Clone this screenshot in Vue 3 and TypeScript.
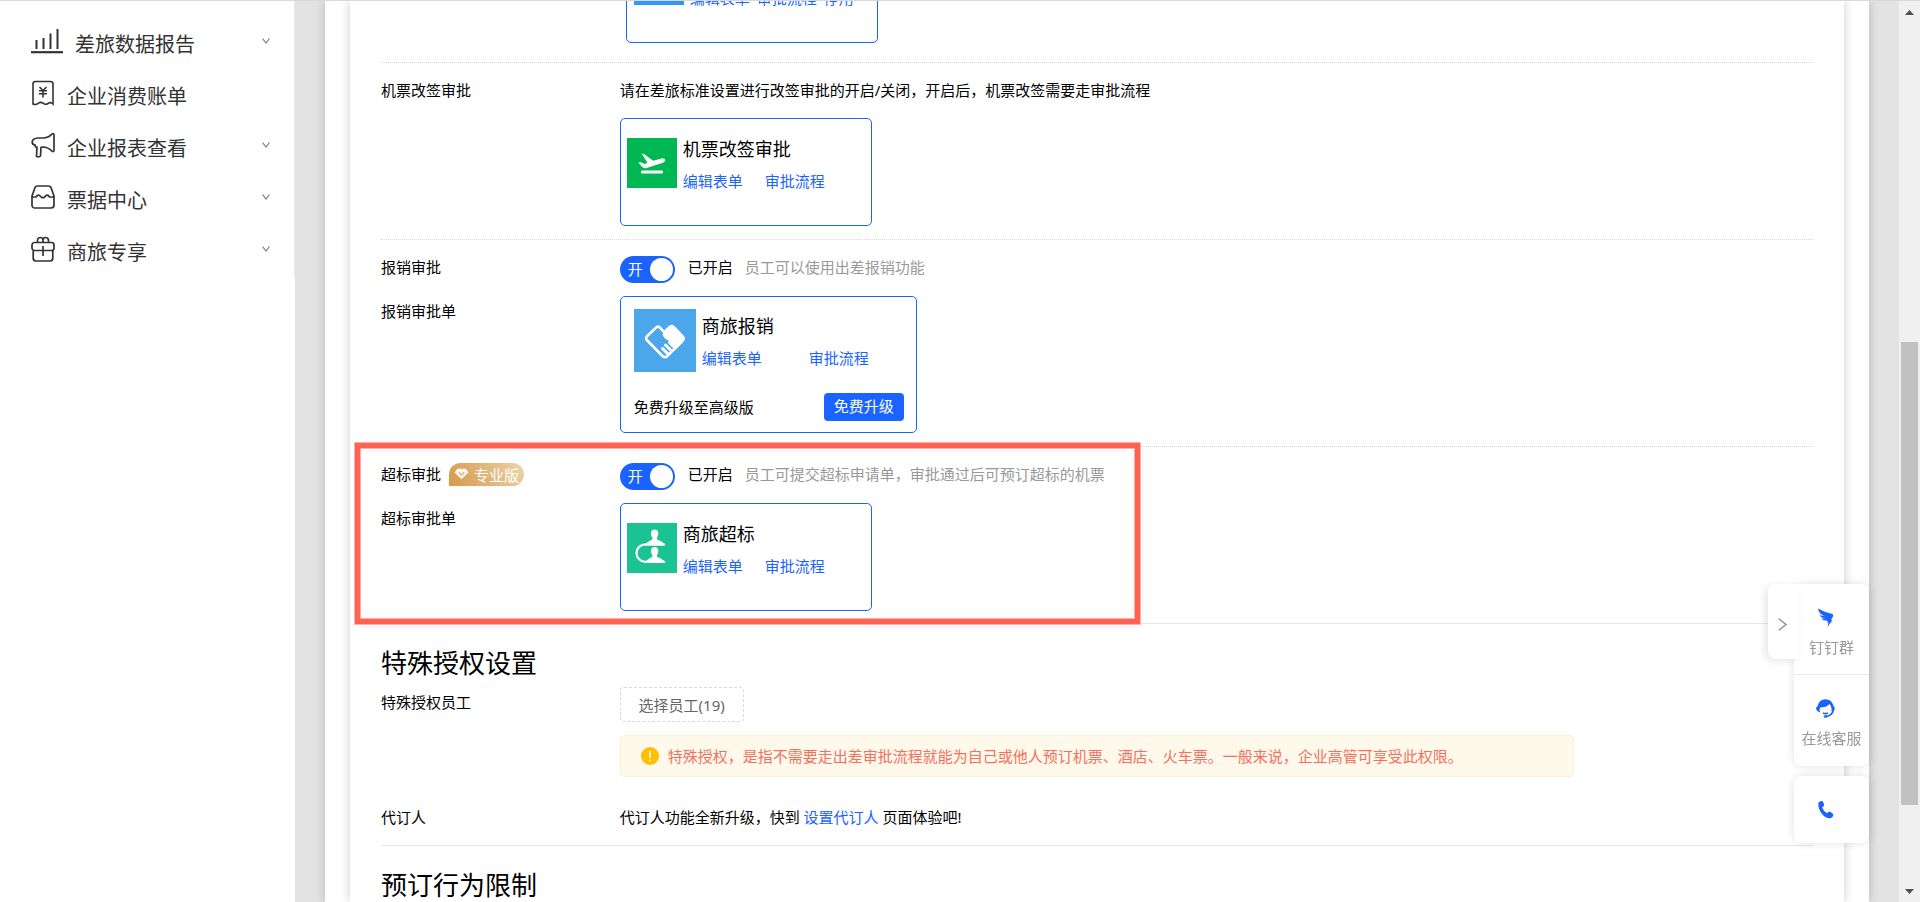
<script setup lang="ts">
import { ref } from 'vue'

interface MenuItem {
  icon: 'chart' | 'bill' | 'horn' | 'ticket' | 'gift'
  label: string
  expandable: boolean
}

const menu: MenuItem[] = [
  { icon: 'chart', label: '差旅数据报告', expandable: true },
  { icon: 'bill', label: '企业消费账单', expandable: false },
  { icon: 'horn', label: '企业报表查看', expandable: true },
  { icon: 'ticket', label: '票据中心', expandable: true },
  { icon: 'gift', label: '商旅专享', expandable: true },
]

const expenseOn = ref(true)
const overLimitOn = ref(true)
</script>

<template>
  <div class="page">
    <aside class="sidebar">
      <nav class="menu">
        <a v-for="item in menu" :key="item.label" href="#" class="menu-item">
          <svg v-if="item.icon === 'chart'" class="icon-wide" viewBox="0 0 32 26" fill="none" stroke="#333">
            <path d="M0 24.2h32" stroke-width="2.2" />
            <path d="M5.5 21V12M12.5 21V10M19.5 21V5.500M26.500 21V1" stroke-width="2" />
          </svg>
          <svg v-else-if="item.icon === 'bill'" class="icon" viewBox="0 0 24 26" fill="none" stroke="#333" stroke-width="1.6">
            <path d="M2 24V4Q2 1.500 4.500 1.500H19.500Q22 1.500 22 4V24Q19.500 21.500 17 23.500 14.500 25.200 12 23.200 9.500 21.500 7 23.500 4.500 25.200 2 24Z" />
            <path d="M8.500 7L12 10.500 15.500 7M8 10.700H16M8 13.700H16M12 10.500V17.500" />
          </svg>
          <svg v-else-if="item.icon === 'horn'" class="icon" viewBox="0 0 24 26" fill="none" stroke="#333" stroke-width="1.7" stroke-linejoin="round">
            <path d="M7 6H13Q18 5.500 21 2Q22.800 1 23 3V18.500Q22.800 20.200 21 19.200 17 15.200 12 15L10 15.300 9.500 24Q8 25.500 5.500 24.500L6 15.200 4.500 15 4.200 13.200Q1 12.500 1.200 9.500 2 6.500 7 6Z" />
          </svg>
          <svg v-else-if="item.icon === 'ticket'" class="icon" viewBox="0 0 24 26" fill="none" stroke="#333" stroke-width="1.7" stroke-linejoin="round">
            <path d="M1 12L4 3.500Q4.800 2 6.500 2H17.500Q19.200 2 20 3.500L23 12V21Q23 24 20 24H4Q1 24 1 21Z" />
            <path d="M1 13H5Q6.500 10.500 8 11.200L11 13.700H13L15.500 11.200Q17 10.500 18.500 13H23" />
          </svg>
          <svg v-else class="icon" viewBox="0 0 24 26" fill="none" stroke="#333" stroke-width="1.7">
            <rect x="1" y="6.500" width="22" height="8" rx="2.500" />
            <path d="M2.200 14.500V22Q2.200 25 5 25H19Q21.800 25 21.800 22V14.500M12 10V20M6.500 6.500V4.500Q6.500 1.500 9.500 1.500 12 1.500 12 4.500V6.500M12 4.500Q12 1.500 14.500 1.500 17.500 1.500 17.500 4.500V6.500" />
          </svg>
          <span>{{ item.label }}</span>
          <svg v-if="item.expandable" class="arrow" viewBox="0 0 8 6" fill="none" stroke="#777" stroke-width="1.100">
            <path d="M0.500 0.500L4 5 7.500 0.500" />
          </svg>
        </a>
      </nav>
    </aside>

    <div class="body">
      <div class="panel">
        <main class="sheet">
          <section class="group group-clipped">
            <div class="field">
              <div class="app-card app-card-inset">
                <span class="app-icon icon-sky"></span>
                <div class="app-info">
                  <h3>出差审批</h3>
                  <p class="links links-tight">
                    <a href="#">编辑表单</a>
                    <a href="#">审批流程</a>
                    <a href="#">停用</a>
                  </p>
                </div>
              </div>
            </div>
          </section>

          <section class="group">
            <div class="label">机票改签审批</div>
            <div class="field">
              <p class="text">请在差旅标准设置进行改签审批的开启/关闭，开启后，机票改签需要走审批流程</p>
              <div class="app-card app-card-after">
                <svg class="app-icon" viewBox="0 0 50 50">
                  <rect width="50" height="50" fill="#00b853" />
                  <path d="M14.500 15.200L17.800 16.500 26 22.800 35.500 20.200Q38 20 38.200 22.200 38 24 36 24.800L19 30.200Q16.500 30.600 15 28.800L11.500 24.800 13.500 24 17.500 26 20.500 24.800Z" fill="#fff" />
                  <rect x="14" y="32.500" width="22" height="3" rx="1" fill="#fff" />
                </svg>
                <div class="app-info">
                  <h3>机票改签审批</h3>
                  <p class="links"><a href="#">编辑表单</a><a href="#">审批流程</a></p>
                </div>
              </div>
            </div>
          </section>

          <section class="group">
            <div id="expense-label" class="label">报销审批</div>
            <div class="field switch-line">
              <button type="button" class="switch" :class="{ off: !expenseOn }" role="switch" :aria-checked="expenseOn" aria-labelledby="expense-label" @click="expenseOn = !expenseOn">
                <span>{{ expenseOn ? '开' : '关' }}</span><i></i>
              </button>
              <span class="state">已开启</span>
              <span class="hint">员工可以使用出差报销功能</span>
            </div>
            <div class="label label-form">报销审批单</div>
            <div class="field">
              <div class="upgrade-card">
                <div class="upgrade-top">
                  <svg class="app-icon-large" viewBox="0 0 62 63">
                    <rect width="62" height="63" fill="#4ca7ea" />
                    <path d="M38 18.500L31.500 24.500Q28 21 25.500 18.200 23.800 17 22 18.600L12.800 27.500Q11.500 29.200 12.800 31L28.500 47Q31 49.200 33.200 47.200L48.500 32" fill="none" stroke="#fff" stroke-width="2.600" stroke-linejoin="round" />
                    <path d="M31 20.500L35.500 16.500Q38 15 40.500 17L50 27Q52 29.500 50 32L42 39.500 34.500 31.500Q31 30.500 28.500 26Z" fill="#fff" />
                    <g stroke="#fff" stroke-width="3" stroke-linecap="round">
                      <path d="M35.500 33.500L41 39M31.500 36L37 41.500M28.500 39.500L34 45" />
                    </g>
                  </svg>
                  <div class="app-info">
                    <h3>商旅报销</h3>
                    <p class="links links-wide"><a href="#">编辑表单</a><a href="#">审批流程</a></p>
                  </div>
                </div>
                <div class="upgrade-bottom">
                  <span>免费升级至高级版</span>
                  <button type="button" class="primary">免费升级</button>
                </div>
              </div>
            </div>
          </section>

          <section class="group group-last">
            <div class="label label-badged">
              <span id="over-label">超标审批</span>
              <span class="badge">
                <svg viewBox="0 0 16 12">
                  <path d="M3.500 0.500H12.500L15.500 4.500 8 11.500 0.500 4.500Z" fill="#fff" opacity="0.900" />
                  <path d="M5 4.200L8 7 11 4.200" fill="none" stroke="#e0b070" stroke-width="1.300" />
                </svg>
                专业版
              </span>
            </div>
            <div class="field switch-line">
              <button type="button" class="switch" :class="{ off: !overLimitOn }" role="switch" :aria-checked="overLimitOn" aria-labelledby="over-label" @click="overLimitOn = !overLimitOn">
                <span>{{ overLimitOn ? '开' : '关' }}</span><i></i>
              </button>
              <span class="state">已开启</span>
              <span class="hint">员工可提交超标申请单，审批通过后可预订超标的机票</span>
            </div>
            <div class="label label-form">超标审批单</div>
            <div class="field">
              <div class="app-card">
                <svg class="app-icon" viewBox="0 0 50 50">
                  <rect width="50" height="50" fill="#1bc294" />
                  <g fill="#fff">
                    <path d="M27.500 6.500C31 6.500 31.800 9.500 31 12.500 30.500 14 29.800 14.500 29.800 16.200 33 18 36.500 18.500 38 22.500H18C20 18.500 23 18 25.500 16.200 25.500 14.500 24.500 14 24.200 12.500 23.500 9.500 24.500 6.500 27.500 6.500Z" />
                    <path d="M27.500 24C31 24 31.800 27 31 30 30.500 31.500 29.800 32 29.800 33.500 33 35.500 36.500 36 38 39.800H18C20 36 23 35.500 25.500 33.500 25.500 32 24.500 31.500 24.200 30 23.500 27 24.500 24 27.500 24Z" />
                  </g>
                  <path d="M37 21.300H18.500A9 8.700 0 0 0 18.500 38.800H37" fill="none" stroke="#fff" stroke-width="2.200" stroke-linecap="round" />
                </svg>
                <div class="app-info">
                  <h3>商旅超标</h3>
                  <p class="links"><a href="#">编辑表单</a><a href="#">审批流程</a></p>
                </div>
              </div>
            </div>
            <div class="highlight" aria-hidden="true"></div>
          </section>

          <section class="block">
            <h2>特殊授权设置</h2>
            <div class="group-row">
              <div class="label label-form">特殊授权员工</div>
              <div class="field">
                <button type="button" class="dashed">选择员工(19)</button>
                <div class="alert" role="note">
                  <svg viewBox="0 0 18 18">
                    <circle cx="9" cy="9" r="9" fill="#ffbf00" />
                    <path d="M9 3.500V11M9 12.800V14.500" stroke="#fff" stroke-width="1.500" />
                  </svg>
                  <span>特殊授权，是指不需要走出差审批流程就能为自己或他人预订机票、酒店、火车票。一般来说，企业高管可享受此权限。</span>
                </div>
              </div>
            </div>
            <div class="group-row booking">
              <div class="label">代订人</div>
              <div class="field">
                <p class="text">代订人功能全新升级，快到 <a href="#">设置代订人</a> 页面体验吧!</p>
              </div>
            </div>
          </section>

          <section class="block">
            <h2>预订行为限制</h2>
          </section>
        </main>
      </div>
    </div>

    <div class="scrollbar" aria-hidden="true">
      <svg viewBox="0 0 9 5"><path d="M0 5L4.500 0 9 5Z" fill="#505050" /></svg>
      <div class="track"><div class="thumb"></div></div>
      <svg viewBox="0 0 9 5"><path d="M0 0L4.500 5 9 0Z" fill="#505050" /></svg>
    </div>

    <div class="floater">
      <button type="button" class="collapse" aria-label="收起">
        <svg viewBox="0 0 9 13" fill="none" stroke="#888" stroke-width="1.300"><path d="M0.800 0.800L8 6.500 0.800 12.200" /></svg>
      </button>
      <div class="float-card">
        <a href="#" class="float-item">
          <svg viewBox="0 0 19 19"><path d="M2 0.500Q8 4 16.500 6 17.500 7 17 8.500L15 12H16.500L11.500 19 12.500 14.500H11L11.800 12.800Q7 13 5.200 10.500L10 10.800Q5 10 3.500 7.200L9 8.200Q2.500 6 2 0.500Z" fill="#1b63ff" /></svg>
          <span>钉钉群</span>
        </a>
        <a href="#" class="float-item">
          <svg viewBox="0 0 19 19">
            <path d="M0 9Q1 7.500 1.500 7.200 3 0.200 9.500 0.200 16 0.500 17.500 7 19 8 18.800 10L17.500 12.500 15.200 12Q16.500 9 13.500 5 10.500 8.500 4.200 8.500 3 10 4.200 13.500L2 12.500Q0 11.500 0 9Z" fill="#1b63ff" />
            <path d="M17.500 11Q16 17.200 9 17.500M7 14Q9.500 15.200 12 14" fill="none" stroke="#1b63ff" stroke-width="1.600" />
            <ellipse cx="9.500" cy="17.500" rx="1.800" ry="1.300" fill="#1b63ff" />
          </svg>
          <span>在线客服</span>
        </a>
      </div>
      <a href="#" class="float-card float-phone" aria-label="电话">
        <svg viewBox="0 0 19 19"><path d="M2.500 2.500Q4 0.500 6.500 1L8.200 4.500Q8 7 6 7.200 7.500 11.200 11 13.200 12 11.500 14.500 11.800L17.300 14.200Q17.500 17 14.500 18.200 10.500 19 6 14 1.500 8.500 2.500 2.500Z" fill="#1b63ff" /></svg>
      </a>
    </div>
  </div>
</template>

<style>
html,
body {
  margin: 0;
  overflow: hidden;
}
</style>

<style scoped>
* {
  box-sizing: border-box;
}
.page {
  position: relative;
  display: flex;
  height: 100vh;
  overflow: hidden;
  border-top: 1px solid #d9d9d9;
  background: #fff;
  color: #000;
  font: 15px/22px "Noto Sans", "Noto Sans CJK SC", sans-serif;
}
a {
  color: #1b63ff;
  text-decoration: none;
}
h2,
h3,
p {
  margin: 0;
  font-weight: 400;
}
button {
  font-family: inherit;
  font-size: 15px;
  line-height: 22px;
  cursor: pointer;
}
svg {
  display: block;
  flex: none;
}

.sidebar {
  flex: none;
  width: 295px;
}
.menu {
  padding: 18px 24px 0 31px;
  height: 276px;
  border-right: 1px solid #e8e8e8;
}
.menu-item {
  display: flex;
  align-items: center;
  height: 52px;
  color: #333;
  font-size: 20px;
  line-height: 28px;
}
.icon-wide {
  width: 32px;
  height: 26px;
  margin: 0 12px 8px 0;
}
.icon {
  width: 24px;
  height: 26px;
  margin: 0 12px 8px 0;
}
.arrow {
  width: 8px;
  height: 6px;
  margin: 0 0 8px auto;
}

.body {
  flex: 1;
  min-width: 0;
  display: flex;
  padding: 0 30px;
  background: #e3e3e3;
}
.panel {
  flex: 1;
  display: flex;
  padding: 0 25px;
  background: #fff;
  box-shadow: 0 0 10px rgba(0, 0, 0, 0.2);
}
.sheet {
  flex: 1;
  padding: 0 31px;
  background: #fff;
  box-shadow: 0 0 10px rgba(0, 0, 0, 0.2);
}

.group,
.group-row {
  display: grid;
  grid-template-columns: 1fr 5fr;
}
.group {
  position: relative;
  row-gap: 13px;
  padding: 16px 0 13px;
  border-bottom: 1px dotted #d9d9d9;
}
.group-clipped {
  height: 62px;
  padding: 0 0 19px;
  overflow: hidden;
  align-content: end;
}
.group-clipped .field {
  grid-column: 2;
}
.group-last {
  padding-bottom: 12px;
  border-bottom: 1px solid #e8e8e8;
}
.label-form {
  padding-top: 4px;
}
.label-badged {
  display: flex;
  align-items: flex-start;
  gap: 8px;
}
.badge {
  display: flex;
  align-items: center;
  gap: 5px;
  height: 23px;
  padding: 0 5px;
  border-radius: 12px 12px 12px 0;
  background: linear-gradient(60deg, #d79a4c, #dfb273 45%, #ecd5ab);
  color: #fff;
}
.badge svg {
  width: 15px;
  height: 12px;
  margin-bottom: 2px;
}

.app-card {
  display: flex;
  align-items: flex-start;
  gap: 6px;
  width: 252px;
  height: 108px;
  padding: 19px 6px;
  border: 1px solid #1b63ff;
  border-radius: 5px;
}
.app-card-after {
  margin-top: 17px;
}
.app-card-inset {
  margin-left: 6px;
  padding-left: 7px;
}
.app-icon {
  flex: none;
  width: 50px;
  height: 50px;
}
.icon-sky {
  background: #3296fa;
}
h3 {
  font-size: 18px;
  line-height: 22px;
}
.links {
  display: flex;
  gap: 22px;
  margin-top: 10px;
}
.links-tight {
  gap: 7px;
}
.links-wide {
  gap: 47px;
}

.switch-line {
  display: flex;
  align-items: flex-start;
}
.switch {
  display: flex;
  align-items: center;
  justify-content: space-between;
  width: 55px;
  height: 27px;
  padding: 0 2px 0 8px;
  border: 0;
  border-radius: 14px;
  background: #1b63ff;
  color: #fff;
}
.switch.off {
  flex-direction: row-reverse;
  padding: 0 8px 0 2px;
  background: #bfbfbf;
}
.switch span {
  padding-bottom: 2px;
}
.switch i {
  width: 23px;
  height: 23px;
  border-radius: 50%;
  background: #fff;
}
.state {
  margin-left: 13px;
}
.hint {
  margin-left: 12px;
  color: #999;
}

.upgrade-card {
  width: 297px;
  padding: 12px 12px 11px 13px;
  border: 1px solid #1b63ff;
  border-radius: 5px;
}
.upgrade-top {
  display: flex;
  gap: 6px;
}
.upgrade-top .app-info {
  padding-top: 6px;
}
.app-icon-large {
  width: 62px;
  height: 63px;
}
.upgrade-bottom {
  display: flex;
  align-items: center;
  justify-content: space-between;
  margin-top: 21px;
}
.primary {
  width: 80px;
  height: 28px;
  padding: 0 0 2px;
  border: 0;
  border-radius: 4px;
  background: #1b63ff;
  color: #fff;
}

/* Callout frame laid over the whole over-limit section */
.highlight {
  position: absolute;
  top: -4px;
  left: -26px;
  width: 785px;
  bottom: -1px;
  border: 5px solid #ff6152;
  box-shadow: 0 0 0 1px #ffb0a8, inset 0 0 0 1px #ffb0a8;
  pointer-events: none;
}

.block {
  padding: 23px 0 17px;
  border-bottom: 1px solid #e8e8e8;
}
h2 {
  margin-bottom: 8px;
  font-size: 26px;
  line-height: 32px;
}
.dashed {
  display: block;
  width: 124px;
  height: 35px;
  padding: 0;
  border: 1px dashed #d9d9d9;
  border-radius: 4px;
  background: #fff;
  color: #666;
}
.alert {
  display: flex;
  align-items: center;
  gap: 9px;
  width: 80%;
  margin-top: 13px;
  padding: 9px 20px;
  border: 1px solid #fff0c9;
  border-radius: 5px;
  background: #fff9ec;
  color: #f4705c;
}
.alert svg {
  width: 18px;
  height: 18px;
}
.booking {
  margin-top: 29px;
}

.scrollbar {
  flex: none;
  display: flex;
  flex-direction: column;
  align-items: center;
  width: 21px;
  padding: 9px 0 8px;
  background: #f0f0f0;
}
.scrollbar svg {
  width: 9px;
  height: 5px;
}
.track {
  flex: 1;
  display: grid;
  grid-template-rows: 327fr 463fr 84fr;
}
.thumb {
  grid-row: 2;
  width: 17px;
  background: #c1c1c1;
}

.floater {
  position: fixed;
  right: 51px;
  bottom: 59px;
  display: flex;
  flex-direction: column;
  gap: 10px;
  width: 75px;
}
.float-card {
  display: block;
  border-radius: 8px;
  background: #fff;
  box-shadow: 0 0 10px rgba(0, 0, 0, 0.12);
}
.float-item {
  display: flex;
  flex-direction: column;
  align-items: center;
  gap: 9px;
  height: 90px;
  padding-top: 24px;
  color: #999;
}
.float-item + .float-item {
  height: 92px;
  border-top: 1px solid #ebebeb;
}
.floater .float-card svg {
  width: 19px;
  height: 19px;
  margin-right: 12px;
}
.floater .float-phone {
  display: flex;
  align-items: center;
  justify-content: center;
  height: 67px;
}
.collapse {
  position: absolute;
  top: 0;
  right: 70px;
  width: 31px;
  height: 75px;
  padding: 6px 0 0 10px;
  border: 0;
  border-radius: 8px 0 0 8px;
  background: #fff;
  box-shadow: -3px 2px 8px rgba(0, 0, 0, 0.1);
}
.collapse svg {
  width: 9px;
  height: 13px;
}
</style>
